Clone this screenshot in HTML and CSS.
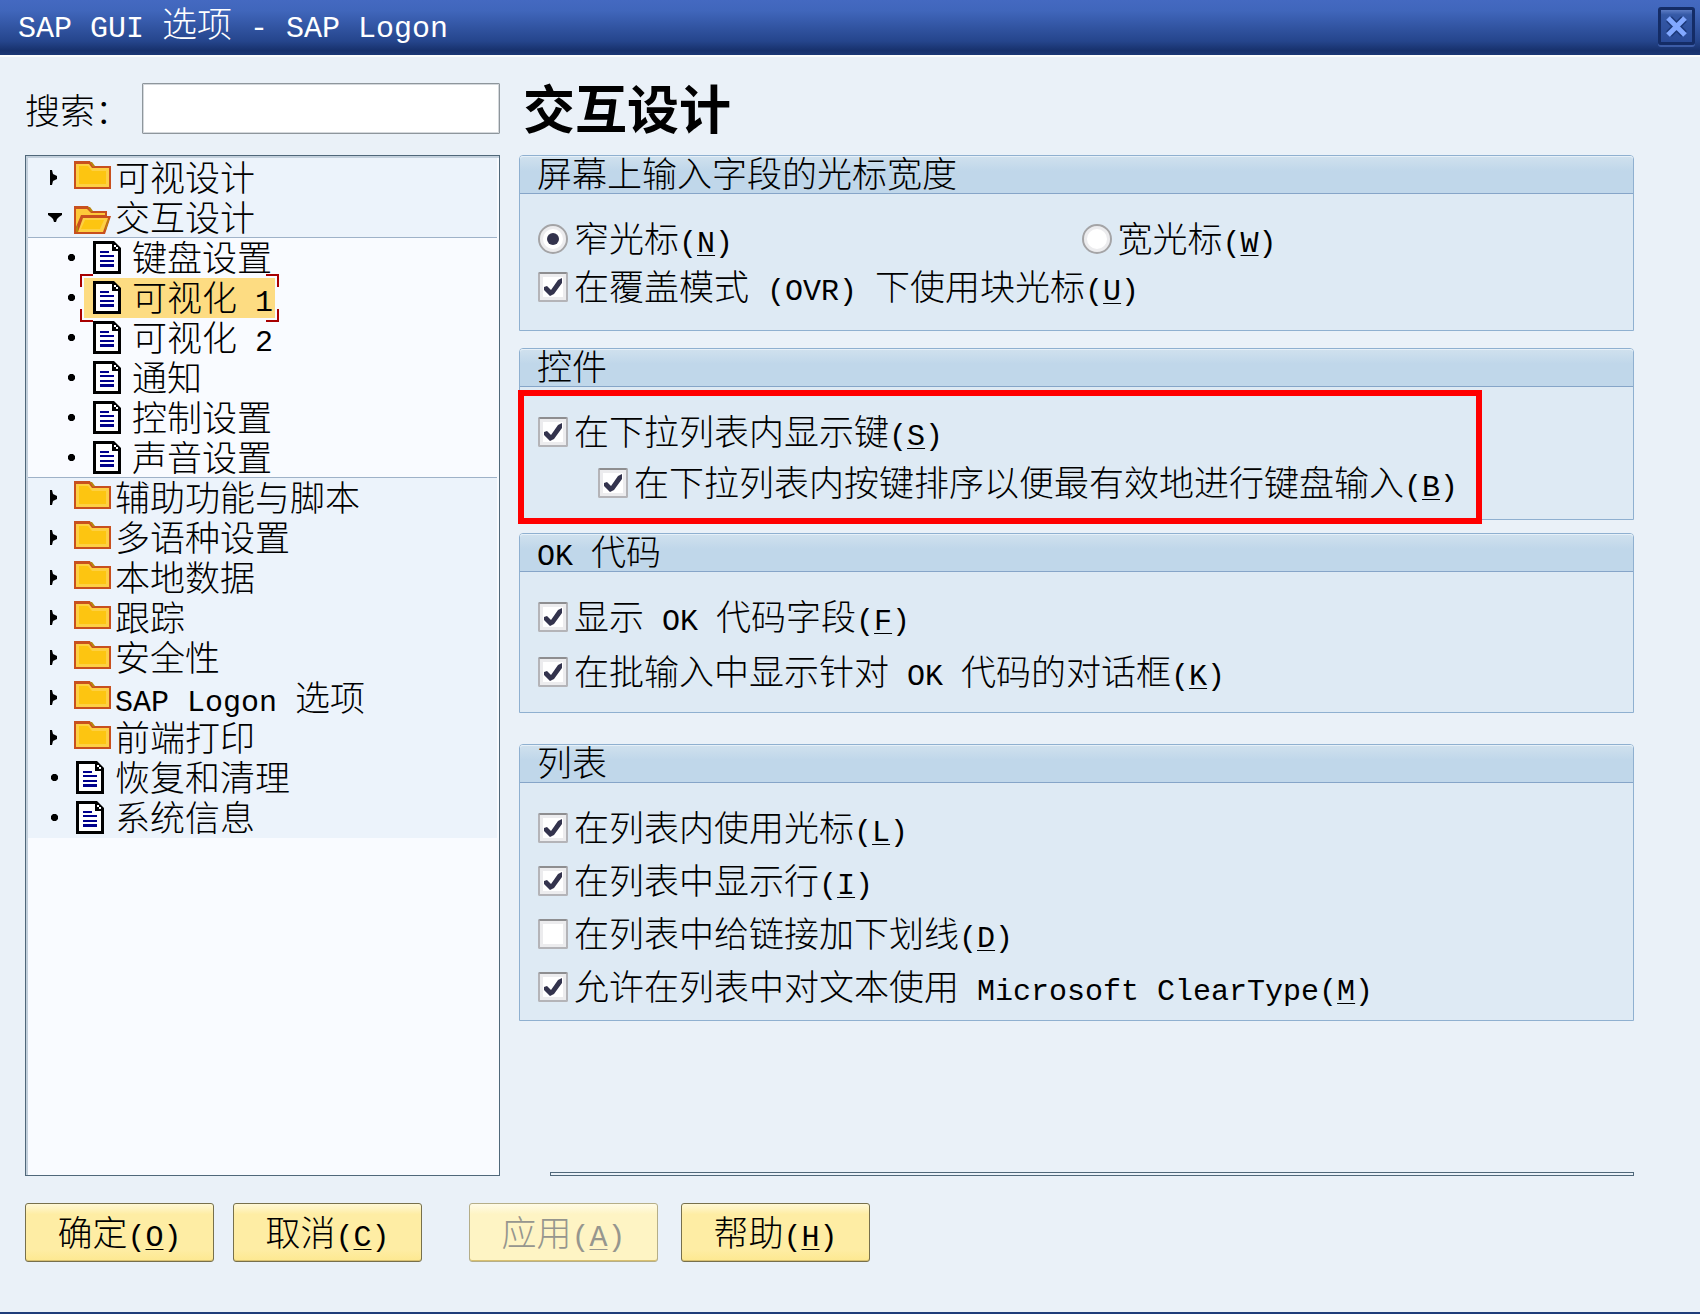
FILE: index.html
```html
<!doctype html>
<html lang="zh-CN">
<head>
  <title>SAP GUI 选项 - SAP Logon</title>
  <meta charset="utf-8">
  <link rel="stylesheet" href="styles.css">
</head>
<body>
  <svg class="sprite" width="0" height="0">
    <symbol id="arrow-right" viewBox="0 0 14 20">
      <path d="M2 2h2l1 4 4 2v3l-4 2-1 4H2z"/>
    </symbol>
    <symbol id="arrow-down" viewBox="0 0 14 20">
      <path d="M0 5h14v2l-3 2-2 2-1 3H6l-1-3-2-2-3-2z"/>
    </symbol>
    <symbol id="dot" viewBox="0 0 14 20">
      <path d="M5 6h3l2 2v3l-2 2H5l-2-2V8z"/>
    </symbol>
    <symbol id="folder" viewBox="0 0 37 28">
      <path fill="#c8501e" d="M0 0h16l3 5h18v23H0z"/>
      <path fill="#fdd044" d="M2 3h13l3 4h17v19H2z"/>
      <path fill="#fdc511" d="M5 5h9l4 5h14v13H5z"/>
      <path fill="#b8860b" d="M16 1h2l3 4-2 1z"/>
    </symbol>
    <symbol id="folder-open" viewBox="0 0 37 28">
      <path fill="#c8501e" d="M0 0h14l4 5h15v5h4l-6 18H0z"/>
      <path fill="#fdc93a" d="M2 3h11l4 4h14v2H7L2 21z"/>
      <path fill="#b8860b" d="M14 1h2l3 4-2 1zM2 22l2-3v7H2zM34 13l1 1-3 10-1-1z"/>
      <path fill="#fdd044" d="M9 12h25l-5 14H4z"/>
      <path fill="#fdc511" d="M11 14h19l-4 9H7z"/>
    </symbol>
    <symbol id="file" viewBox="0 0 28 33">
      <path d="M0 0h21l7 7v26H0z"/>
      <path fill="#fff" d="M3 3h16v7h6v20H3z"/>
      <path fill="#fff" d="M21 4h2v2h-2zM23 6h2v2h-2z"/>
      <path fill="#00008b" d="M7 10h9v2H7zM7 14h14v2H7zM7 19h14v2H7zM7 23h14v3H7z"/>
    </symbol>
  </svg>

  <div class="titlebar">
    <span class="title"><span class="en">SAP GUI </span>选项<span class="en"> - SAP Logon</span></span>
    <button class="close" type="button" aria-label="关闭">
      <svg width="21" height="21" viewBox="0 0 21 21">
        <path stroke="#1c3878" stroke-width="8" d="M3 3l15 15M18 3L3 18"/>
        <path stroke="#82a8ff" stroke-width="5" d="M2 2l17 17M19 2L2 19"/>
      </svg>
    </button>
  </div>

  <form class="options">
    <div class="main">
      <div class="side">
        <div class="search">
          <label for="search">搜索：</label>
          <input id="search" type="text">
        </div>
        <ul class="tree">
          <li><svg class="mark"><use href="#arrow-right"/></svg><a href="#"><svg class="folder"><use href="#folder"/></svg>可视设计</a></li>
          <li class="line"><svg class="mark"><use href="#arrow-down"/></svg><a href="#"><svg class="folder low"><use href="#folder-open"/></svg>交互设计</a></li>
          <li class="child"><svg class="mark"><use href="#dot"/></svg><a href="#"><svg class="file"><use href="#file"/></svg>键盘设置</a></li>
          <li class="child"><svg class="mark"><use href="#dot"/></svg><a href="#" class="active"><svg class="file"><use href="#file"/></svg><span>可视化<span class="en"> 1</span></span></a></li>
          <li class="child"><svg class="mark"><use href="#dot"/></svg><a href="#"><svg class="file"><use href="#file"/></svg><span>可视化<span class="en"> 2</span></span></a></li>
          <li class="child"><svg class="mark"><use href="#dot"/></svg><a href="#"><svg class="file"><use href="#file"/></svg>通知</a></li>
          <li class="child"><svg class="mark"><use href="#dot"/></svg><a href="#"><svg class="file"><use href="#file"/></svg>控制设置</a></li>
          <li class="child line"><svg class="mark"><use href="#dot"/></svg><a href="#"><svg class="file"><use href="#file"/></svg>声音设置</a></li>
          <li><svg class="mark"><use href="#arrow-right"/></svg><a href="#"><svg class="folder"><use href="#folder"/></svg>辅助功能与脚本</a></li>
          <li><svg class="mark"><use href="#arrow-right"/></svg><a href="#"><svg class="folder"><use href="#folder"/></svg>多语种设置</a></li>
          <li><svg class="mark"><use href="#arrow-right"/></svg><a href="#"><svg class="folder"><use href="#folder"/></svg>本地数据</a></li>
          <li><svg class="mark"><use href="#arrow-right"/></svg><a href="#"><svg class="folder"><use href="#folder"/></svg>跟踪</a></li>
          <li><svg class="mark"><use href="#arrow-right"/></svg><a href="#"><svg class="folder"><use href="#folder"/></svg>安全性</a></li>
          <li><svg class="mark"><use href="#arrow-right"/></svg><a href="#"><svg class="folder"><use href="#folder"/></svg><span><span class="en">SAP Logon </span>选项</span></a></li>
          <li><svg class="mark"><use href="#arrow-right"/></svg><a href="#"><svg class="folder"><use href="#folder"/></svg>前端打印</a></li>
          <li><svg class="mark"><use href="#dot"/></svg><a href="#"><svg class="file"><use href="#file"/></svg>恢复和清理</a></li>
          <li><svg class="mark"><use href="#dot"/></svg><a href="#"><svg class="file"><use href="#file"/></svg>系统信息</a></li>
        </ul>
      </div>

      <div class="content">
        <h1>交互设计</h1>

        <section class="group cursor">
          <h2>屏幕上输入字段的光标宽度</h2>
          <div class="rows">
            <div class="pair">
              <label><input type="radio" name="cursor" checked><span>窄光标<span class="en">(<u>N</u>)</span></span></label>
              <label><input type="radio" name="cursor"><span>宽光标<span class="en">(<u>W</u>)</span></span></label>
            </div>
            <label><input type="checkbox" checked><span>在覆盖模式<span class="en"> (OVR) </span>下使用块光标<span class="en">(<u>U</u>)</span></span></label>
          </div>
        </section>

        <section class="group controls">
          <h2>控件</h2>
          <div class="rows">
            <label><input type="checkbox" checked><span>在下拉列表内显示键<span class="en">(<u>S</u>)</span></span></label>
            <label class="nested"><input type="checkbox" checked><span>在下拉列表内按键排序以便最有效地进行键盘输入<span class="en">(<u>B</u>)</span></span></label>
          </div>
          <div class="highlight"></div>
        </section>

        <section class="group okcode">
          <h2><span class="en">OK </span>代码</h2>
          <div class="rows">
            <label><input type="checkbox" checked><span>显示<span class="en"> OK </span>代码字段<span class="en">(<u>F</u>)</span></span></label>
            <label><input type="checkbox" checked><span>在批输入中显示针对<span class="en"> OK </span>代码的对话框<span class="en">(<u>K</u>)</span></span></label>
          </div>
        </section>

        <section class="group lists">
          <h2>列表</h2>
          <div class="rows">
            <label><input type="checkbox" checked><span>在列表内使用光标<span class="en">(<u>L</u>)</span></span></label>
            <label><input type="checkbox" checked><span>在列表中显示行<span class="en">(<u>I</u>)</span></span></label>
            <label><input type="checkbox"><span>在列表中给链接加下划线<span class="en">(<u>D</u>)</span></span></label>
            <label><input type="checkbox" checked><span>允许在列表中对文本使用<span class="en"> Microsoft ClearType(<u>M</u>)</span></span></label>
          </div>
        </section>

        <div class="rule"></div>
      </div>
    </div>

    <div class="buttons">
      <button type="button">确定<span class="en">(<u>O</u>)</span></button>
      <button type="button">取消<span class="en">(<u>C</u>)</span></button>
      <button type="button" class="apply" disabled>应用<span class="en">(<u>A</u>)</span></button>
      <button type="button">帮助<span class="en">(<u>H</u>)</span></button>
    </div>
  </form>
</body>
</html>
```

FILE: styles.css
```css
* {
  box-sizing: border-box;
}
body {
  margin: 0;
  min-height: 100vh;
  display: flex;
  flex-direction: column;
  background: #eaf1f8;
  border-bottom: 2px solid #1f3d7a;
  color: #000;
  font-family: "Noto Sans CJK SC", sans-serif;
  font-size: 35px;
  font-weight: 300;
  line-height: 36px;
}
.sprite {
  position: absolute;
}
/* latin letters are half the width of a chinese one */
.en {
  font-family: "Liberation Mono", monospace;
  font-size: 30px;
  line-height: 30px;
  white-space: pre;
}
u {
  text-decoration-thickness: 1px;
  text-underline-offset: 3px;
}

/* title bar */
.titlebar {
  display: flex;
  justify-content: space-between;
  height: 57px;
  padding: 4px 5px 0 18px;
  border-bottom: 2px solid #fbfdfd;
  background: linear-gradient(#4469c1, #4066bb 20%, #25458c 75%, #17316c 92%, #1c3875);
  color: #fff;
}
.close {
  display: flex;
  align-items: center;
  justify-content: center;
  width: 37px;
  height: 38px;
  margin-top: 3px;
  padding: 0;
  border: 3px solid #142c66;
  border-radius: 3px;
  background: linear-gradient(#5c7cc4, #3559a6 15%, #2a4b98);
  box-shadow: 0 2px 0 #3c5ca6;
}

.options {
  flex: 1;
  display: flex;
  flex-direction: column;
  padding: 26px 66px 50px 25px;
}
.main {
  flex: 1;
  display: grid;
  grid-template-columns: 475px 1fr;
  gap: 19px;
}

/* left side */
.side {
  display: flex;
  flex-direction: column;
}
.search {
  display: flex;
  align-items: center;
  justify-content: space-between;
  margin-bottom: 21px;
}
.search input {
  width: 358px;
  height: 51px;
  border: 1px solid #8e969c;
  border-radius: 1px;
  background: #fff;
  box-shadow: inset 0 0 0 1px #d4d8dc;
  font: inherit;
}
.tree {
  flex: 1;
  margin: 0;
  padding: 2px;
  list-style: none;
  border: 1px solid #50687a;
  background: #f9fbff;
  box-shadow: inset 2px 2px 0 #c3d0dc;
}
.tree li {
  display: flex;
  align-items: center;
  height: 40px;
  padding-left: 20px;
  background: #ecf3fb;
}
.tree li.child {
  padding-left: 37px;
  background: #f9fbff;
}
.tree li.line {
  border-bottom: 1px solid #9fb2c8;
}
.tree a {
  position: relative;
  display: flex;
  height: 40px;
  margin-left: 5px;
  padding-left: 7px;
  padding-right: 1px;
  color: #000;
  text-decoration: none;
}
.mark {
  width: 14px;
  height: 20px;
}
.folder {
  width: 37px;
  height: 28px;
  margin: 3px 4px 0 0;
}
.low {
  margin-top: 8px;
}
.file {
  width: 28px;
  height: 33px;
  margin: 3px 11px 0 2px;
}
.tree a.active {
  padding-right: 2px;
  background: #fddc82;
}
/* red corners round the selected node */
.active::before {
  content: "";
  position: absolute;
  inset: -4px;
  --red: linear-gradient(#a80000, #a80000);
  background:
    var(--red) 0 0 / 13px 2px, var(--red) 0 0 / 2px 13px,
    var(--red) 100% 0 / 13px 2px, var(--red) 100% 0 / 2px 13px,
    var(--red) 0 100% / 13px 2px, var(--red) 0 100% / 2px 13px,
    var(--red) 100% 100% / 13px 2px, var(--red) 100% 100% / 2px 13px;
  background-repeat: no-repeat;
}

/* right side */
.content {
  display: flex;
  flex-direction: column;
}
h1 {
  margin: 0 0 25px;
  padding-left: 4px;
  font-size: 52px;
  font-weight: 700;
  line-height: 47px;
}
.group {
  position: relative;
  border: 1px solid #8fb0d0;
  border-radius: 4px 4px 0 0;
  background: #deeaf4;
}
.group h2 {
  height: 38px;
  margin: 0;
  padding-left: 17px;
  border-bottom: 1px solid #86a5c8;
  border-radius: 3px 3px 0 0;
  background: linear-gradient(#d0e1ee, #c0d7ea 40%);
  box-shadow: inset 0 1px 0 #e6f0f8;
  font-size: 35px;
  font-weight: 300;
  line-height: 32px;
}
.rows {
  display: flex;
  flex-direction: column;
  align-items: flex-start;
  padding: 25px 18px 13px;
}
.cursor {
  margin-bottom: 17px;
}
.cursor .rows {
  gap: 8px;
  padding-bottom: 23px;
}
.controls {
  margin-bottom: 13px;
}
.controls .rows {
  gap: 11px;
  padding-bottom: 16px;
}
.okcode {
  margin-bottom: 31px;
}
.okcode .rows {
  gap: 15px;
  padding-bottom: 20px;
}
.lists .rows {
  gap: 13px;
}
.rows label {
  display: flex;
  align-items: center;
  gap: 6px;
  height: 40px;
}
.rows .nested {
  margin-left: 60px;
}
.pair {
  display: grid;
  grid-template-columns: 1fr 1fr;
  gap: 10px;
  align-self: stretch;
}
.highlight {
  position: absolute;
  top: 41px;
  left: -2px;
  right: 151px;
  bottom: -5px;
  border: 6px solid #f00;
  pointer-events: none;
}
input[type=checkbox],
input[type=radio] {
  appearance: none;
  position: relative;
  flex: none;
  width: 30px;
  height: 30px;
  margin: 0;
  border: 2px solid #b4b4b8;
  border-top-color: #8e8e90;
  border-radius: 2px;
  background: #fff;
  box-shadow: inset 0 0 0 3px #ececee;
}
input[type=radio] {
  border-color: #a4a4a6;
  border-radius: 50%;
}
input[type=checkbox]:checked::before {
  content: "";
  position: absolute;
  inset: -2px;
  background: #33334d;
  clip-path: polygon(6px 15px, 9px 14px, 13px 18px, 20px 8px, 24px 6px, 24px 11px, 16px 22px, 12px 24px, 6px 18px);
}
input[type=radio]:checked::before {
  content: "";
  position: absolute;
  inset: 7px;
  border-radius: 50%;
  background: #33334d;
}
.rule {
  height: 4px;
  margin: auto 0 0 31px;
  border: 1px solid #50687a;
}

/* bottom buttons */
.buttons {
  display: flex;
  gap: 19px;
  margin-top: 27px;
}
.buttons button {
  width: 189px;
  height: 59px;
  padding: 0;
  border: 1px solid #77704c;
  border-radius: 3px;
  background: linear-gradient(#fff8d6, #feeda4 18%, #feeda4 80%, #fde890);
  box-shadow: inset 0 -1px 0 #d8c070;
  color: #000;
  font: inherit;
}
.buttons .apply {
  margin: 0 4px 0 28px;
  border-color: #b5ae88;
  background: linear-gradient(#fffbe6, #fef4c4 18%, #fef4c4);
  color: #96968e;
}
```
